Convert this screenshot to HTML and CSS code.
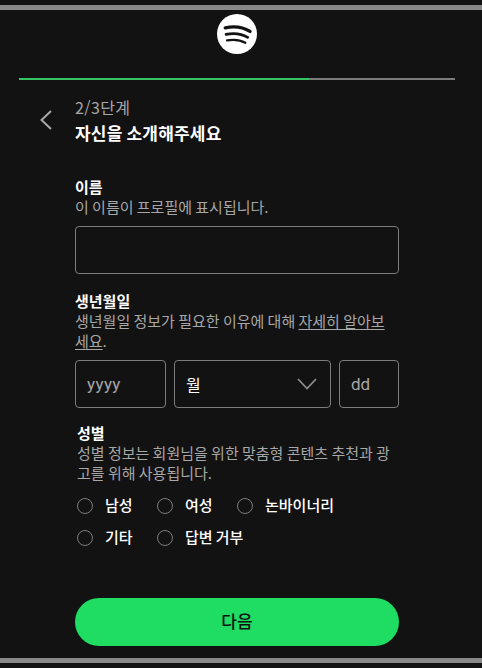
FILE: index.html
```html
<!DOCTYPE html>
<html lang="ko">
<head>
<meta charset="utf-8">
<title>가입하기</title>
<link rel="stylesheet" href="styles.css">
</head>
<body>
<div class="page">
  <header class="logo">
    <svg width="40" height="40" viewBox="0 0 40 40" fill="none" stroke="#121212" stroke-linecap="round">
      <circle cx="20" cy="20" r="20" fill="#fff" stroke="none"/>
      <path d="M8.3 13.8C17 11.9 26 13 33 17.4" stroke-width="3.4"/>
      <path d="M9.1 20.4C17 18.8 24.5 19.7 30.7 23.4" stroke-width="2.8"/>
      <path d="M10 26.4C17 25.2 23 25.8 28.4 28.8" stroke-width="2.2"/>
    </svg>
  </header>
  <div class="progress"><div class="progress-value"></div></div>
  <div class="step">
    <svg class="back" width="14" height="22" viewBox="0 0 14 22" fill="none" stroke="#a7a7a7" stroke-width="2"><path d="M12 2 2.5 11l9.5 9"/></svg>
    <div>
      <p class="step-count">2/3단계</p>
      <h1>자신을 소개해주세요</h1>
    </div>
  </div>
  <form class="form">
    <section class="name">
      <h2>이름</h2>
      <p class="hint">이 이름이 프로필에 표시됩니다.</p>
      <div class="field"></div>
    </section>
    <section class="birth">
      <h2>생년월일</h2>
      <p class="hint">생년월일 정보가 필요한 이유에 대해 <a>자세히 알아보<br>세요</a>.</p>
      <div class="date">
        <div class="field placeholder year">yyyy</div>
        <div class="field month"><span>월</span>
          <svg width="20" height="12" viewBox="0 0 20 12" fill="none" stroke="#8c8c8c" stroke-width="1.8"><path d="m1 1 9 9.5L19 1"/></svg>
        </div>
        <div class="field placeholder">dd</div>
      </div>
    </section>
    <section class="gender">
      <h2>성별</h2>
      <p class="hint">성별 정보는 회원님을 위한 맞춤형 콘텐츠 추천과 광<br>고를 위해 사용됩니다.</p>
      <div class="options">
        <div class="option"><i></i><span>남성</span></div>
        <div class="option"><i></i><span>여성</span></div>
        <div class="option"><i></i><span>논바이너리</span></div>
        <div class="option"><i></i><span>기타</span></div>
        <div class="option wide"><i></i><span>답변 거부</span></div>
      </div>
    </section>
    <div class="next">다음</div>
  </form>
</div>
</body>
</html>
```
FILE: styles.css
```css
* { box-sizing: border-box; }
body { margin: 0; background: #121212; color: #fff; font-family: "Noto Sans CJK KR", sans-serif; }
h1, h2, p { margin: 0; white-space: nowrap; }
.page { height: 658px; margin-top: 5px; border-top: 5px solid #898989; border-bottom: 5px solid #898989; overflow: hidden; }
.logo { height: 44px; margin: 4px 0 0 217px; }
.logo svg, .back, .month svg { display: block; }
.progress { width: 436px; height: 2px; margin: 20px 0 0 19px; background: #7c7c7c; }
.progress-value { width: 290px; height: 2px; background: #35c565; }
.step { display: flex; margin: 14px 0 0 39px; height: 54px; }
.back { margin: 15px 22px 0 0; }
.step-count { font-size: 16px; line-height: 26px; color: #a7a7a7; letter-spacing: 0.4px; }
h1 { font-size: 17px; line-height: 26px; font-weight: 700; letter-spacing: 0.2px; word-spacing: -1px; }
.form { width: 324px; margin-left: 75px; }
.name { padding-top: 29px; }
h2 { font-size: 15px; line-height: 20px; font-weight: 700; }
.hint { font-size: 15px; line-height: 20px; color: #a7a7a7; word-spacing: -0.9px; }
.hint a { text-decoration: underline; text-underline-offset: 2px; }
.field { height: 48px; border: 1px solid #7c7c7c; border-radius: 4px; }
.name .field { margin-top: 9px; }
.birth { margin-top: 17px; }
.date { display: grid; grid-template-columns: 91px 157px 60px; gap: 8px; margin-top: 9px; }
.date .field { display: flex; align-items: center; padding: 0 11px; font-size: 16px; }
.date .placeholder { color: #a7a7a7; font-family: Roboto, sans-serif; font-size: 17px; }
.date .year { letter-spacing: 0.4px; }
.date .month { justify-content: space-between; padding-right: 13px; }
.gender { margin: 15px 0 0 2px; }
.options { display: grid; grid-template-columns: 80px 80px 120px; row-gap: 12px; margin-top: 12px; }
.option { display: flex; height: 20px; gap: 12px; font-size: 15px; line-height: 20px; font-weight: 500; word-spacing: -1px; white-space: nowrap; }
.option i { width: 16px; height: 16px; margin-top: 3px; border: 1px solid #7c7c7c; border-radius: 50%; }
.wide { grid-column: span 2; }
.next { height: 48px; margin-top: 51px; border-radius: 24px; background: #1fdc62; color: #121212; display: flex; align-items: center; justify-content: center; font-size: 17px; line-height: 24px; padding-bottom: 2px; font-weight: 500; }
```
